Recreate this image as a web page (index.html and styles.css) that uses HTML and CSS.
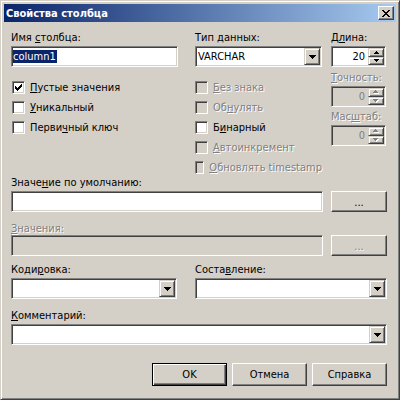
FILE: index.html
```html
<!DOCTYPE html>
<html lang="ru">
<head>
    <meta charset="UTF-8">
    <title>Свойства столбца</title>
    <link rel="stylesheet" href="styles.css">
</head>
<body>
    <div class="window">
        <div class="titlebar">
            <span class="title">Свойства столбца</span>
            <span class="close-btn">
                <svg width="8" height="7" viewBox="0 0 8 7" shape-rendering="crispEdges"><path d="M0 0h2v1h-2z M6 0h2v1h-2z M1 1h2v1h-2z M5 1h2v1h-2z M2 2h4v1h-4z M3 3h2v1h-2z M2 4h4v1h-4z M1 5h2v1h-2z M5 5h2v1h-2z M0 6h2v1h-2z M6 6h2v1h-2z" fill="#000"/></svg>
            </span>
        </div>

        <div class="client">
            <div class="top">
                <div class="col col-name">
                    <div class="lbl">Имя <u>с</u>толбца:</div>
                    <div class="edit"><span class="sel">column1</span></div>
                    <div class="checks">
                        <div class="check">
                            <span class="box">
                                <svg width="7" height="7" viewBox="0 0 7 7" shape-rendering="crispEdges"><path d="M6 0h1v1h-1z M5 1h2v1h-2z M0 2h1v1h-1z M4 2h3v1h-3z M0 3h2v1h-2z M3 3h3v1h-3z M0 4h5v1h-5z M1 5h3v1h-3z M2 6h1v1h-1z" fill="#000"/></svg>
                            </span>
                            <span><u>П</u>устые значения</span>
                        </div>
                        <div class="check"><span class="box"></span><span><u>У</u>никальный</span></div>
                        <div class="check"><span class="box"></span><span>Перви<u>ч</u>ный ключ</span></div>
                    </div>
                </div>

                <div class="col col-type">
                    <div class="lbl">Тип <u>д</u>анных:</div>
                    <div class="edit combo">
                        <span class="combo-text">VARCHAR</span>
                        <span class="drop"><svg width="7" height="4" viewBox="0 0 7 4" shape-rendering="crispEdges"><path d="M0 0h7v1h-1v1h-1v1h-1v1h-1v-1h-1v-1h-1v-1h-1z" fill="#000"/></svg></span>
                    </div>
                    <div class="checks">
                        <div class="check disabled"><span class="box"></span><span><u>Б</u>ез знака</span></div>
                        <div class="check disabled"><span class="box"></span><span>Об<u>н</u>улять</span></div>
                        <div class="check"><span class="box"></span><span>Б<u>и</u>нарный</span></div>
                        <div class="check disabled"><span class="box"></span><span><u>А</u>втоинкремент</span></div>
                        <div class="check disabled"><span class="box"></span><span><u>О</u>бновлять timestamp</span></div>
                    </div>
                </div>

                <div class="col col-len">
                    <div class="lbl">Д<u>л</u>ина:</div>
                    <div class="edit spin">
                        <span class="spin-val">20</span>
                        <span class="spin-btns">
                            <span class="spin-btn"><svg width="5" height="3" viewBox="0 0 5 3" shape-rendering="crispEdges"><path d="M2 0h1v1h1v1h1v1h-5v-1h1v-1h1z" fill="#000"/></svg></span>
                            <span class="spin-btn"><svg width="5" height="3" viewBox="0 0 5 3" shape-rendering="crispEdges"><path d="M0 0h5v1h-1v1h-1v1h-1v-1h-1v-1h-1z" fill="#000"/></svg></span>
                        </span>
                    </div>
                    <div class="lbl lbl-prec disabled"><u>Т</u>очность:</div>
                    <div class="edit spin off">
                        <span class="spin-val">0</span>
                        <span class="spin-btns">
                            <span class="spin-btn"><svg width="6" height="4" viewBox="0 0 6 4" shape-rendering="crispEdges"><path d="M3 1h1v1h1v1h1v1h-5v-1h1v-1h1z" fill="#fff"/><path d="M2 0h1v1h1v1h1v1h-5v-1h1v-1h1z" fill="#808080"/></svg></span>
                            <span class="spin-btn"><svg width="6" height="4" viewBox="0 0 6 4" shape-rendering="crispEdges"><path d="M1 1h5v1h-1v1h-1v1h-1v-1h-1v-1h-1z" fill="#fff"/><path d="M0 0h5v1h-1v1h-1v1h-1v-1h-1v-1h-1z" fill="#808080"/></svg></span>
                        </span>
                    </div>
                    <div class="lbl lbl-scale disabled">Мас<u>ш</u>таб:</div>
                    <div class="edit spin off">
                        <span class="spin-val">0</span>
                        <span class="spin-btns">
                            <span class="spin-btn"><svg width="6" height="4" viewBox="0 0 6 4" shape-rendering="crispEdges"><path d="M3 1h1v1h1v1h1v1h-5v-1h1v-1h1z" fill="#fff"/><path d="M2 0h1v1h1v1h1v1h-5v-1h1v-1h1z" fill="#808080"/></svg></span>
                            <span class="spin-btn"><svg width="6" height="4" viewBox="0 0 6 4" shape-rendering="crispEdges"><path d="M1 1h5v1h-1v1h-1v1h-1v-1h-1v-1h-1z" fill="#fff"/><path d="M0 0h5v1h-1v1h-1v1h-1v-1h-1v-1h-1z" fill="#808080"/></svg></span>
                        </span>
                    </div>
                </div>
            </div>

            <div class="lbl lbl-default">Значе<u>н</u>ие по умолчанию:</div>
            <div class="row">
                <div class="edit wide"></div>
                <span class="btn dots">...</span>
            </div>

            <div class="lbl lbl-values disabled"><u>З</u>начения:</div>
            <div class="row">
                <div class="edit wide off"></div>
                <span class="btn dots disabled">...</span>
            </div>

            <div class="row row-labels">
                <div class="lbl lbl-enc">Коди<u>р</u>овка:</div>
                <div class="lbl lbl-coll">Соста<u>в</u>ление:</div>
            </div>
            <div class="row">
                <div class="edit combo enc">
                    <span class="combo-text"></span>
                    <span class="drop"><svg width="7" height="4" viewBox="0 0 7 4" shape-rendering="crispEdges"><path d="M0 0h7v1h-1v1h-1v1h-1v1h-1v-1h-1v-1h-1v-1h-1z" fill="#000"/></svg></span>
                </div>
                <div class="edit combo coll">
                    <span class="combo-text"></span>
                    <span class="drop"><svg width="7" height="4" viewBox="0 0 7 4" shape-rendering="crispEdges"><path d="M0 0h7v1h-1v1h-1v1h-1v1h-1v-1h-1v-1h-1v-1h-1z" fill="#000"/></svg></span>
                </div>
            </div>

            <div class="lbl lbl-comment"><u>К</u>омментарий:</div>
            <div class="edit combo">
                <span class="combo-text"></span>
                <span class="drop"><svg width="7" height="4" viewBox="0 0 7 4" shape-rendering="crispEdges"><path d="M0 0h7v1h-1v1h-1v1h-1v1h-1v-1h-1v-1h-1v-1h-1z" fill="#000"/></svg></span>
            </div>

            <div class="buttons">
                <span class="btn default">OK</span>
                <span class="btn">Отмена</span>
                <span class="btn">Справка</span>
            </div>
        </div>
    </div>
</body>
</html>
```

FILE: styles.css
```css
body {
    margin: 0;
    background: #d4d0c8;
    font-family: "DejaVu Sans Condensed", "DejaVu Sans", sans-serif;
    font-size: 11px;
    color: #000;
}
.window {
    width: 400px;
    height: 400px;
    box-sizing: border-box;
    border: 1px solid;
    border-color: #d4d0c8 #404040 #404040 #d4d0c8;
    box-shadow: inset 1px 1px #fff, inset -1px -1px #808080;
    padding: 3px;
    display: flex;
    flex-direction: column;
}
.titlebar {
    height: 18px;
    flex: none;
    background: linear-gradient(to right, #0a246a, #a6caf0);
    display: flex;
    align-items: center;
    justify-content: space-between;
    padding: 0 2px 0 2px;
}
.title {
    color: #fff;
    font-weight: bold;
}
.close-btn {
    width: 16px;
    height: 14px;
    box-sizing: border-box;
    background: #d4d0c8;
    border: 1px solid;
    border-color: #fff #404040 #404040 #fff;
    box-shadow: inset -1px -1px #808080;
    display: flex;
    align-items: center;
    justify-content: center;
}
.client {
    flex: 1;
    padding: 9px 9px 0 7px;
    display: flex;
    flex-direction: column;
}
u {
    text-decoration: underline;
    text-underline-offset: 1px;
}
.lbl {
    height: 13px;
    line-height: 13px;
    margin-bottom: 2px;
    white-space: nowrap;
}
.disabled {
    color: #808080;
    text-shadow: 1px 1px 0 #fff;
}

/* top block with three columns */
.top {
    display: flex;
}
.col {
    display: flex;
    flex-direction: column;
}
.col-name {
    width: 167px;
    margin-right: 17px;
}
.col-type {
    width: 127px;
    margin-right: 9px;
}
.col-len {
    width: 55px;
}
.lbl-prec {
    margin-top: 4px;
}
.lbl-scale {
    margin-top: 3px;
}

/* sunken edit fields */
.edit {
    height: 21px;
    box-sizing: border-box;
    background: #fff;
    border: 1px solid;
    border-color: #808080 #fff #fff #808080;
    box-shadow: inset 1px 1px #404040, inset -1px -1px #d4d0c8;
    display: flex;
    align-items: center;
    padding: 0 1px;
}
.edit.off {
    background: #d4d0c8;
}
.sel {
    background: #0a246a;
    color: #fff;
    line-height: 13px;
    padding-right: 1px;
}
.combo {
    padding: 1px 1px 1px 2px;
    align-items: stretch;
}
.combo-text {
    flex: 1;
    line-height: 17px;
}
.drop, .spin-btn {
    box-sizing: border-box;
    background: #d4d0c8;
    border: 1px solid;
    border-color: #d4d0c8 #404040 #404040 #d4d0c8;
    box-shadow: inset 1px 1px #fff, inset -1px -1px #808080;
    display: flex;
    align-items: center;
    justify-content: center;
}
.drop {
    width: 16px;
}
.spin {
    padding: 1px;
    align-items: stretch;
}
.spin-val {
    flex: 1;
    text-align: right;
    line-height: 17px;
    padding-right: 3px;
}
.spin.off .spin-val {
    color: #808080;
}
.spin-btns {
    width: 16px;
    display: flex;
    flex-direction: column;
}
.spin-btn {
    flex: 1;
}

/* checkboxes */
.checks {
    margin-top: 14px;
    display: flex;
    flex-direction: column;
    gap: 7px;
}
.check {
    display: flex;
    align-items: center;
    height: 13px;
    line-height: 13px;
    white-space: nowrap;
}
.box {
    width: 13px;
    height: 13px;
    box-sizing: border-box;
    margin: 0 5px 0 1px;
    background: #fff;
    border: 1px solid;
    border-color: #808080 #fff #fff #808080;
    box-shadow: inset 1px 1px #404040, inset -1px -1px #d4d0c8;
    display: flex;
    align-items: center;
    justify-content: center;
}
.check.disabled .box {
    background: #d4d0c8;
}
.col-type .box {
    margin-left: 0;
}

/* lower rows */
.lbl-default {
    margin-top: 2px;
}
.lbl-values {
    margin-top: 10px;
    margin-bottom: 0;
}
.row {
    display: flex;
    gap: 8px;
}
.wide {
    width: 312px;
}
.row-labels {
    margin-top: 7px;
    gap: 18px;
}
.lbl-enc {
    width: 166px;
}
.row .enc {
    width: 166px;
    margin-right: 10px;
}
.row .coll {
    flex: 1;
}
.lbl-comment {
    margin-top: 10px;
}

/* push buttons */
.btn {
    width: 75px;
    height: 23px;
    box-sizing: border-box;
    border: 1px solid;
    border-color: #fff #404040 #404040 #fff;
    box-shadow: inset -1px -1px #808080;
    display: flex;
    align-items: center;
    justify-content: center;
}
.btn.dots {
    width: 56px;
    height: 21px;
    padding-top: 2px;
}
.btn.default {
    border-color: #000;
    box-shadow: inset 1px 1px #fff, inset -1px -1px #404040, inset -2px -2px #808080;
}
.buttons {
    margin-top: 18px;
    display: flex;
    justify-content: flex-end;
    gap: 5px;
}
```
